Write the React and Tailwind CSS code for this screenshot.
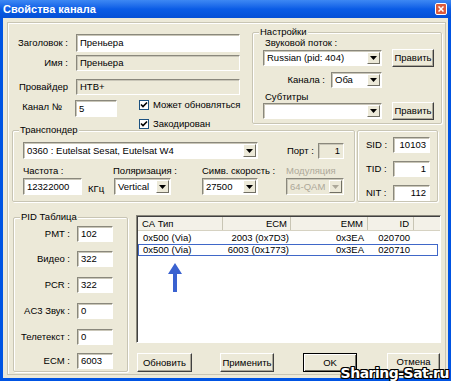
import React from "react";
import clsx from "clsx";

const Field = ({ className, value, right, ro }) => (
  <div
    className={clsx(
      "flex items-center px-[3px] border border-t-[#8a887c] border-l-[#8a887c] border-b-white border-r-white shadow-[inset_1px_1px_0_#c9c6b8] whitespace-nowrap overflow-hidden",
      ro ? "bg-[#ece9d8]" : "bg-white",
      right && "justify-end",
      className
    )}
  >
    {value}
  </div>
);

const Select = ({ className, value, disabled }) => (
  <div
    className={clsx(
      "flex items-stretch border border-t-[#8a887c] border-l-[#8a887c] border-b-white border-r-white shadow-[inset_1px_1px_0_#c9c6b8]",
      disabled ? "bg-[#ece9d8] text-[#aca899]" : "bg-white",
      className
    )}
  >
    <div className="flex-1 flex items-center pl-[3px] overflow-hidden whitespace-nowrap">{value}</div>
    <div className="w-[13px] m-[1px] flex items-center justify-center bg-[#ece9d8] border border-t-white border-l-white border-b-[#716f64] border-r-[#716f64]">
      <svg width="7" height="4" viewBox="0 0 7 4">
        <path d="M0 0h7L3.5 4z" fill={disabled ? "#aca899" : "#000"} />
      </svg>
    </div>
  </div>
);

const Btn = ({ className, children, def }) => (
  <div
    className={clsx(
      "flex items-center justify-center bg-[#ece9d8] border",
      def
        ? "border-black shadow-[inset_1px_1px_0_white,inset_-1px_-1px_0_#716f64]"
        : "border-t-white border-l-white border-b-[#404040] border-r-[#404040] shadow-[inset_-1px_-1px_0_#aca899]",
      className
    )}
  >
    {children}
  </div>
);

const Group = ({ className, label, children }) => (
  <div className={clsx("relative border border-[#c8c5b4] rounded-[2px] shadow-[inset_1px_1px_0_white,1px_1px_0_white]", className)}>
    {label && (
      <span className="absolute -top-[7px] left-[6px] px-[1px] bg-[#ece9d8] leading-[12px]">{label}</span>
    )}
    {children}
  </div>
);

const Check = ({ label, className }) => (
  <div className={clsx("flex items-center", className)}>
    <div className="w-[10px] h-[10px] bg-white border border-[#1c5180] flex items-center justify-center">
      <svg width="8" height="8" viewBox="0 0 8 8">
        <path d="M1 3.5l2 2L7 1.5" stroke="#000" strokeWidth="1.6" fill="none" />
      </svg>
    </div>
    <span className="ml-[4px]">{label}</span>
  </div>
);

const pids = [
  ["PMT :", "102", "mt-[8px]"],
  ["Видео :", "322", "mt-[9px]"],
  ["PCR :", "322", "mt-[10px]"],
  ["AC3 Звук :", "0", "mt-[10px]"],
  ["Телетекст :", "0", "mt-[10px]"],
  ["ECM :", "6003", "mt-[8px]"],
];

const rows = [
  ["0x500 (Via)", "2003 (0x7D3)", "0x3EA", "020700"],
  ["0x500 (Via)", "6003 (0x1773)", "0x3EA", "020710"],
];

export default function App() {
  return (
    <div className="relative w-[451px] h-[381px] flex flex-col bg-[#0054e3] text-[9.5px] leading-[12px] text-black font-['Liberation_Sans',Arial,sans-serif]">
      {/* title bar */}
      <div className="h-[18px] flex items-center justify-between pl-[3px] pr-[4px] bg-gradient-to-b from-[#3d88f3] via-[#0a5ce6] to-[#0550d6]">
        <span className="text-white font-bold text-[11px]">Свойства канала</span>
        <div className="w-[12px] h-[12px] rounded-[2px] bg-[#dc5a3c] border border-white flex items-center justify-center">
          <svg width="6" height="6" viewBox="0 0 6 6">
            <path d="M0.5 0.5l5 5M5.5 0.5l-5 5" stroke="#fff" strokeWidth="1.5" />
          </svg>
        </div>
      </div>

      <div className="flex-1 mx-[3px] mb-[3px] bg-[#ece9d8] pt-[4px] pl-[4px] pr-[2px] pb-[3px] flex">
        <div className="flex-1 flex flex-col border border-[#c8c5b4] shadow-[inset_1px_1px_0_white]">
          {/* section 1 */}
          <div className="flex h-[106px]">
            <div className="w-[244px] flex flex-col">
              <div className="flex items-center mt-[11px] h-[18px]">
                <span className="w-[60px] text-right">Заголовок :</span>
                <Field className="ml-[8px] w-[164px] h-[18px]" value="Преньера" />
              </div>
              <div className="flex items-center mt-[3px] h-[16px]">
                <span className="w-[60px] text-right">Имя :</span>
                <Field ro className="ml-[8px] w-[164px] h-[16px]" value="Преньера" />
              </div>
              <div className="flex items-center mt-[8px] h-[16px]">
                <span className="w-[60px] text-right">Провайдер</span>
                <Field ro className="ml-[8px] w-[164px] h-[16px]" value="НТВ+" />
              </div>
              <div className="flex items-start mt-[2px]">
                <span className="w-[54px] text-right mt-[4px]">Канал №</span>
                <Field className="ml-[13px] mt-[3px] w-[42px] h-[17px]" value="5" />
                <div className="ml-[22px] mt-[2px] flex flex-col gap-[7px]">
                  <Check label="Может обновляться" />
                  <Check label="Закодирован" />
                </div>
              </div>
            </div>

            <Group label="Настройки" className="mt-[9px] w-[190px] h-[92px] flex flex-col">
              <span className="ml-[12px] mt-[4px]">Звуковой поток :</span>
              <div className="flex items-start">
                <Select className="ml-[10px] mt-[1px] w-[119px] h-[16px]" value="Russian  (pid: 404)" />
                <Btn className="ml-[10px] w-[42px] h-[18px]">Править</Btn>
              </div>
              <div className="flex items-center mt-[5px]">
                <span className="ml-[10px] w-[62px] text-right">Канала :</span>
                <Select className="ml-[6px] w-[51px] h-[16px]" value="Оба" />
              </div>
              <span className="ml-[12px] mt-[3px]">Субтитры</span>
              <div className="flex items-start -mt-[1px]">
                <Select className="ml-[10px] mt-[1px] w-[119px] h-[16px]" value="" />
                <Btn className="ml-[10px] w-[42px] h-[18px]">Править</Btn>
              </div>
            </Group>
          </div>

          {/* section 2 */}
          <div className="flex h-[74px]">
            <Group label="Транспондер" className="ml-[4px] mt-[1px] w-[343px] h-[72px] flex flex-col">
              <div className="flex items-center mt-[11px]">
                <Select className="ml-[10px] w-[235px] h-[17px]" value="0360 : Eutelsat Sesat, Eutelsat W4" />
                <span className="ml-[29px] w-[31px]">Порт :</span>
                <Field ro right className="w-[26px] h-[16px]" value="1" />
              </div>
              <div className="flex mt-[6px] ml-[10px]">
                <span className="w-[90px]">Частота :</span>
                <span className="w-[89px]">Поляризация :</span>
                <span className="w-[84px]">Симв. скорость :</span>
                <span className="text-[#aca899]">Модуляция</span>
              </div>
              <div className="flex items-center mt-[1px] ml-[10px]">
                <div className="w-[90px] flex items-center">
                  <Field className="w-[59px] h-[17px]" value="12322000" />
                  <span className="ml-[6px] mt-[4px]">КГц</span>
                </div>
                <div className="w-[89px]">
                  <Select className="ml-[1px] w-[57px] h-[17px]" value="Vertical" />
                </div>
                <div className="w-[84px]">
                  <Select className="w-[56px] h-[17px]" value="27500" />
                </div>
                <Select disabled className="w-[58px] h-[17px]" value="64-QAM" />
              </div>
            </Group>

            <Group className="ml-[2px] mt-[1px] w-[81px] h-[72px] flex flex-col">
              {[
                ["SID :", "10103", "mt-[6px]"],
                ["TID :", "1", "mt-[8px]"],
                ["NIT :", "112", "mt-[8px]"],
              ].map(([l, v, m]) => (
                <div key={l} className={clsx("flex items-center", m)}>
                  <span className="ml-[8px] w-[27px]">{l}</span>
                  <Field right className="w-[37px] h-[16px]" value={v} />
                </div>
              ))}
            </Group>
          </div>

          {/* section 3 */}
          <div className="flex flex-1">
            <Group label="PID Таблица" className="ml-[5px] mt-[14px] w-[115px] h-[155px] flex flex-col">
              {pids.map(([l, v, m]) => (
                <div key={l} className={clsx("flex items-center", m)}>
                  <span className="w-[56px] text-right">{l}</span>
                  <Field className="ml-[7px] w-[36px] h-[16px]" value={v} />
                </div>
              ))}
            </Group>

            <div className="ml-[8px] w-[305px] flex flex-col">
              <div className="mt-[12px] h-[128px] bg-white border border-t-[#8a887c] border-l-[#8a887c] border-b-white border-r-white shadow-[inset_1px_1px_0_#404040] flex flex-col pl-[1px] pt-[1px]">
                <div className="flex h-[14px] bg-[#f3f1e8] border-b border-[#d6d2c2]">
                  <div className="w-[85px] pl-[4px] border-r border-[#c8c5b4] flex items-center">СА Тип</div>
                  <div className="w-[68px] pr-[3px] border-r border-[#c8c5b4] flex items-center justify-end">ECM</div>
                  <div className="w-[77px] pr-[4px] border-r border-[#c8c5b4] flex items-center justify-end">EMM</div>
                  <div className="w-[46px] pr-[4px] border-r border-[#c8c5b4] flex items-center justify-end">ID</div>
                  <div className="flex-1" />
                </div>
                <div className="mt-[1px] flex flex-col">
                  {rows.map((r, i) => (
                    <div
                      key={i}
                      className={clsx(
                        "flex h-[12px] items-center mr-[2px] border",
                        i === 1 ? "border-[#3f67c8]" : "border-transparent"
                      )}
                    >
                      <div className="w-[84px] pl-[4px]">{r[0]}</div>
                      <div className="w-[68px] pr-[2px] text-right">{r[1]}</div>
                      <div className="w-[77px] pr-[4px] text-right">{r[2]}</div>
                      <div className="w-[46px] pr-[4px] text-right">{r[3]}</div>
                    </div>
                  ))}
                </div>
                <svg className="ml-[30px] mt-[7px]" width="14" height="29" viewBox="0 0 14 29">
                  <path d="M7 0L14 11H9V29H5V11H0Z" fill="#3a62d0" />
                </svg>
              </div>
              <div className="flex mt-[10px] h-[19px]">
                <Btn className="ml-[1px] w-[55px] h-[19px]">Обновить</Btn>
                <Btn className="ml-[28px] w-[54px] h-[19px]">Применить</Btn>
                <Btn def className="ml-[29px] w-[54px] h-[19px]">OK</Btn>
                <Btn className="ml-[30px] w-[53px] h-[19px] items-start pt-[2px]">Отмена</Btn>
              </div>
            </div>
          </div>
        </div>
      </div>

      <span className="absolute right-[2px] bottom-[2px] text-[14px] leading-[12px] font-bold text-white font-['DejaVu_Sans',sans-serif] tracking-[-0.5px] [text-shadow:1px_1px_0_#000,-1px_-1px_0_#000,1px_-1px_0_#000,-1px_1px_0_#000,0_1px_0_#000,0_-1px_0_#000,1px_0_0_#000,-1px_0_0_#000]">
        Sharing-Sat.ru
      </span>
    </div>
  );
}
